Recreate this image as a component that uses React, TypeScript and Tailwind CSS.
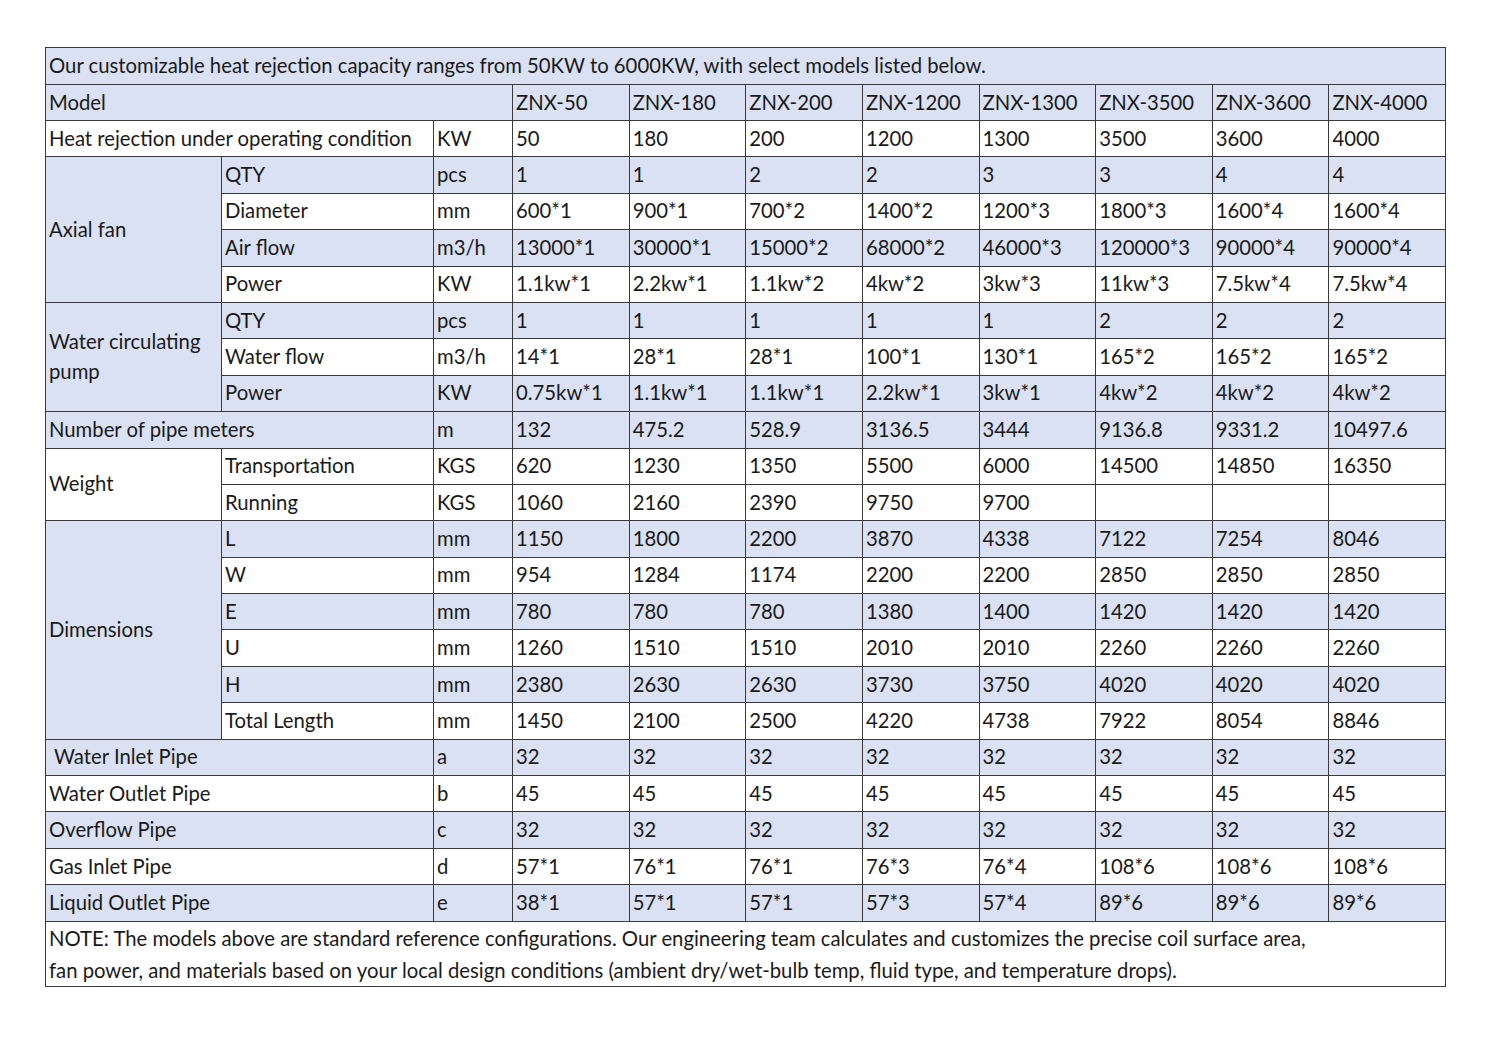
import React from 'react'

const models = ['ZNX-50', 'ZNX-180', 'ZNX-200', 'ZNX-1200', 'ZNX-1300', 'ZNX-3500', 'ZNX-3600', 'ZNX-4000']

type Row = {
  group?: { label: string; span: number; blue: boolean }
  label: string
  full?: boolean
  unit: string
  values: string[]
  blue: boolean
  indent?: boolean
}

const rows: Row[] = [
  { label: 'Heat rejection under operating condition', full: true, unit: 'KW', values: ['50', '180', '200', '1200', '1300', '3500', '3600', '4000'], blue: false },
  { group: { label: 'Axial fan', span: 4, blue: true }, label: 'QTY', unit: 'pcs', values: ['1', '1', '2', '2', '3', '3', '4', '4'], blue: true },
  { label: 'Diameter', unit: 'mm', values: ['600*1', '900*1', '700*2', '1400*2', '1200*3', '1800*3', '1600*4', '1600*4'], blue: false },
  { label: 'Air flow', unit: 'm3/h', values: ['13000*1', '30000*1', '15000*2', '68000*2', '46000*3', '120000*3', '90000*4', '90000*4'], blue: true },
  { label: 'Power', unit: 'KW', values: ['1.1kw*1', '2.2kw*1', '1.1kw*2', '4kw*2', '3kw*3', '11kw*3', '7.5kw*4', '7.5kw*4'], blue: false },
  { group: { label: 'Water circulating pump', span: 3, blue: true }, label: 'QTY', unit: 'pcs', values: ['1', '1', '1', '1', '1', '2', '2', '2'], blue: true },
  { label: 'Water flow', unit: 'm3/h', values: ['14*1', '28*1', '28*1', '100*1', '130*1', '165*2', '165*2', '165*2'], blue: false },
  { label: 'Power', unit: 'KW', values: ['0.75kw*1', '1.1kw*1', '1.1kw*1', '2.2kw*1', '3kw*1', '4kw*2', '4kw*2', '4kw*2'], blue: true },
  { label: 'Number of pipe meters', full: true, unit: 'm', values: ['132', '475.2', '528.9', '3136.5', '3444', '9136.8', '9331.2', '10497.6'], blue: true },
  { group: { label: 'Weight', span: 2, blue: false }, label: 'Transportation', unit: 'KGS', values: ['620', '1230', '1350', '5500', '6000', '14500', '14850', '16350'], blue: false },
  { label: 'Running', unit: 'KGS', values: ['1060', '2160', '2390', '9750', '9700', '', '', ''], blue: false },
  { group: { label: 'Dimensions', span: 6, blue: true }, label: 'L', unit: 'mm', values: ['1150', '1800', '2200', '3870', '4338', '7122', '7254', '8046'], blue: true },
  { label: 'W', unit: 'mm', values: ['954', '1284', '1174', '2200', '2200', '2850', '2850', '2850'], blue: false },
  { label: 'E', unit: 'mm', values: ['780', '780', '780', '1380', '1400', '1420', '1420', '1420'], blue: true },
  { label: 'U', unit: 'mm', values: ['1260', '1510', '1510', '2010', '2010', '2260', '2260', '2260'], blue: false },
  { label: 'H', unit: 'mm', values: ['2380', '2630', '2630', '3730', '3750', '4020', '4020', '4020'], blue: true },
  { label: 'Total Length', unit: 'mm', values: ['1450', '2100', '2500', '4220', '4738', '7922', '8054', '8846'], blue: false },
  { label: 'Water Inlet Pipe', full: true, indent: true, unit: 'a', values: ['32', '32', '32', '32', '32', '32', '32', '32'], blue: true },
  { label: 'Water Outlet Pipe', full: true, unit: 'b', values: ['45', '45', '45', '45', '45', '45', '45', '45'], blue: false },
  { label: 'Overflow Pipe', full: true, unit: 'c', values: ['32', '32', '32', '32', '32', '32', '32', '32'], blue: true },
  { label: 'Gas Inlet Pipe', full: true, unit: 'd', values: ['57*1', '76*1', '76*1', '76*3', '76*4', '108*6', '108*6', '108*6'], blue: false },
  { label: 'Liquid Outlet Pipe', full: true, unit: 'e', values: ['38*1', '57*1', '57*1', '57*3', '57*4', '89*6', '89*6', '89*6'], blue: true },
]

const base = 'border border-[#3a3a3a] px-[3px] pt-0 text-left align-middle'
const cell = `${base} pb-[2px] whitespace-nowrap`

export default function App() {
  return (
    <div className="min-h-screen bg-white pt-[47px] pl-[45px] text-[#1a1a1a]" style={{ fontFamily: 'Lato, "Open Sans", sans-serif' }}>
      <table className="table-fixed border-collapse w-[1401px] text-[20.3px] leading-[30px]">
        <colgroup>
          <col className="w-[176px]" />
          <col className="w-[212px]" />
          <col className="w-[79px]" />
          {models.map((m) => (
            <col key={m} />
          ))}
        </colgroup>
        <tbody>
          <tr className="h-[37px] bg-[#d9e1f2]">
            <td colSpan={11} className={cell}>
              Our customizable heat rejection capacity ranges from 50KW to 6000KW, with select models listed below.
            </td>
          </tr>
          <tr className="h-[36px] bg-[#d9e1f2]">
            <td colSpan={3} className={cell}>Model</td>
            {models.map((m) => (
              <td key={m} className={cell}>{m}</td>
            ))}
          </tr>
          {rows.map((r, i) => (
            <tr key={i} className={`h-[36.4px] ${r.blue ? 'bg-[#d9e1f2]' : 'bg-white'}`}>
              {r.group && (
                <td rowSpan={r.group.span} className={`${base} pb-[2px] whitespace-normal ${r.group.blue ? 'bg-[#d9e1f2]' : 'bg-white'}`}>
                  {r.group.label}
                </td>
              )}
              {r.full ? (
                <td colSpan={2} className={`${cell} ${r.indent ? 'pl-[8px]' : ''}`}>{r.label}</td>
              ) : (
                <td className={cell}>{r.label}</td>
              )}
              <td className={cell}>{r.unit}</td>
              {r.values.map((v, j) => (
                <td key={j} className={cell}>{v}</td>
              ))}
            </tr>
          ))}
          <tr className="h-[65px] bg-white">
            <td colSpan={11} className={`${base} pb-0 leading-[32px]`}>
              NOTE: The models above are standard reference configurations. Our engineering team calculates and customizes the precise coil surface area,
              <br />
              fan power, and materials based on your local design conditions (ambient dry/wet-bulb temp, fluid type, and temperature drops).
            </td>
          </tr>
        </tbody>
      </table>
    </div>
  )
}
